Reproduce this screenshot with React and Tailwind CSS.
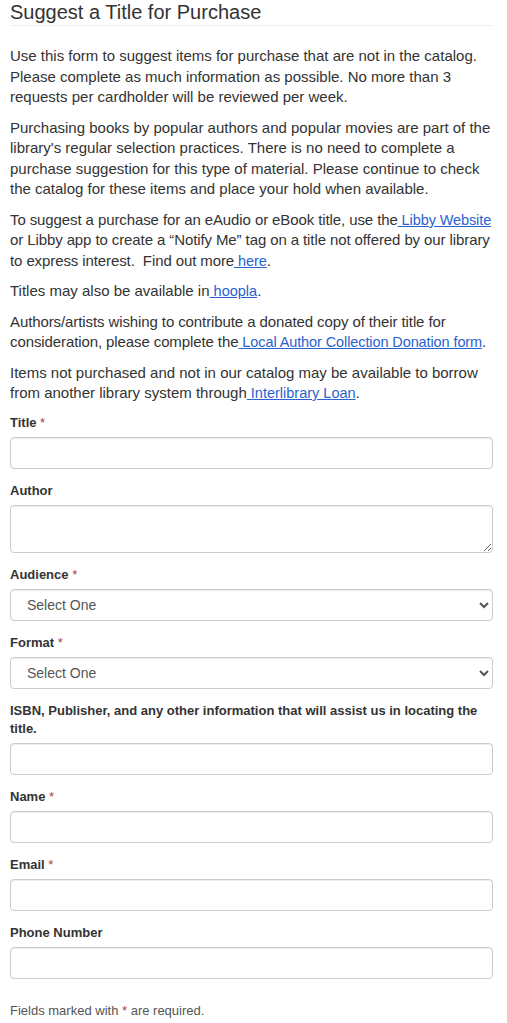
import React from "react";

const Req = () => <span className="text-[#a94442] font-normal"> *</span>;

const Label = ({ children, required }) => (
  <label className="block text-[13px] font-bold leading-[18px] text-[#333] mb-[5px]">
    {children}
    {required && <Req />}
  </label>
);

const inputCls =
  "block w-full h-[32px] rounded-[4px] border border-[#ccc] bg-white px-3 text-[14px] text-[#555] shadow-[inset_0_1px_1px_rgba(0,0,0,0.075)]";

const A = ({ children }) => (
  <a href="#" className="text-[#2a62d0] underline text-[14.5px]">
    {children}
  </a>
);

export default function App() {
  return (
    <div className="bg-white min-h-screen px-[10px] pr-[14px] text-[#333] font-['Liberation_Sans',Arial,sans-serif]">
      <h1 className="text-[20px] leading-[24px] pt-0 pb-[1px] border-b border-[#eee] text-[#333] font-normal">
        Suggest a Title for Purchase
      </h1>

      <div className="mt-[20px] text-[15px] leading-[20.5px]">
        <p className="mb-[10px]">
          Use this form to suggest items for purchase that are not in the catalog. Please complete as much
          information as possible. No more than 3 requests per cardholder will be reviewed per week.
        </p>
        <p className="mb-[10px]">
          Purchasing books by popular authors and popular movies are part of the library's regular selection
          practices. There is no need to complete a purchase suggestion for this type of material. Please continue
          to check the catalog for these items and place your hold when available.
        </p>
        <p className="mb-[10px] tracking-[-0.1px]">
          To suggest a purchase for an eAudio or eBook title, use the<A> Libby Website</A> or Libby app to create a
          “Notify Me” tag on a title not offered by our library to express interest.&nbsp; Find out more
          <A> here</A>.
        </p>
        <p className="mb-[10px]">
          Titles may also be available in<A> hoopla</A>.
        </p>
        <p className="mb-[10px] tracking-[-0.1px]">
          Authors/artists wishing to contribute a donated copy of their title for consideration, please complete
          the<A> Local Author Collection Donation form</A>.
        </p>
        <p className="mb-[10px]">
          Items not purchased and not in our catalog may be available to borrow from another library system
          through<A> Interlibrary Loan</A>.
        </p>
      </div>

      <form className="flex flex-col gap-[13px] mt-[2px]">
        <div>
          <Label required>Title</Label>
          <input type="text" className={inputCls} />
        </div>
        <div>
          <Label>Author</Label>
          <textarea className="block w-full h-[48px] rounded-[4px] border border-[#ccc] bg-white px-3 py-1 text-[14px] text-[#555] shadow-[inset_0_1px_1px_rgba(0,0,0,0.075)]" />
        </div>
        <div>
          <Label required>Audience</Label>
          <select className={inputCls}>
            <option>Select One</option>
          </select>
        </div>
        <div>
          <Label required>Format</Label>
          <select className={inputCls}>
            <option>Select One</option>
          </select>
        </div>
        <div>
          <Label>ISBN, Publisher, and any other information that will assist us in locating the title.</Label>
          <input type="text" className={inputCls} />
        </div>
        <div>
          <Label required>Name</Label>
          <input type="text" className={inputCls} />
        </div>
        <div>
          <Label required>Email</Label>
          <input type="email" className={inputCls} />
        </div>
        <div>
          <Label>Phone Number</Label>
          <input type="tel" className={inputCls} />
        </div>
      </form>

      <p className="mt-[23px] text-[13px] leading-[18px] text-[#555] pb-4">
        Fields marked with <span className="text-[#a94442]">*</span> are required.
      </p>
    </div>
  );
}
